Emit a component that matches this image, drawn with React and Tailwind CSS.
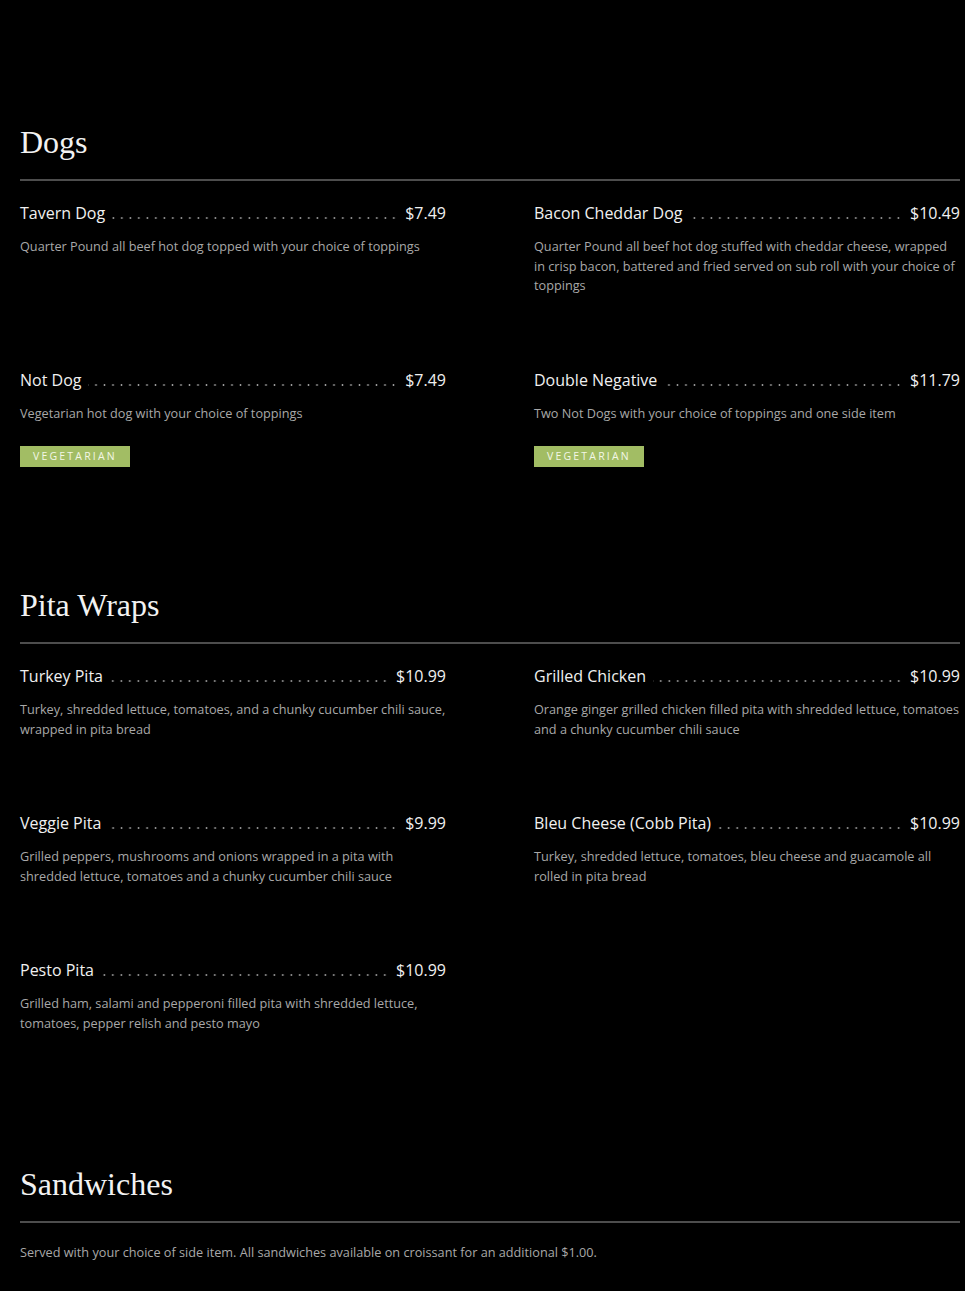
const sections = [
  {
    title: 'Dogs',
    gap: 'mb-[46px]',
    items: [
      { name: 'Tavern Dog', price: '$7.49', desc: 'Quarter Pound all beef hot dog topped with your choice of toppings' },
      { name: 'Bacon Cheddar Dog', price: '$10.49', desc: 'Quarter Pound all beef hot dog stuffed with cheddar cheese, wrapped in crisp bacon, battered and fried served on sub roll with your choice of toppings' },
      { name: 'Not Dog', price: '$7.49', desc: 'Vegetarian hot dog with your choice of toppings', tag: 'Vegetarian' },
      { name: 'Double Negative', price: '$11.79', desc: 'Two Not Dogs with your choice of toppings and one side item', tag: 'Vegetarian' },
    ],
  },
  {
    title: 'Pita Wraps',
    gap: 'mb-[59px]',
    items: [
      { name: 'Turkey Pita', price: '$10.99', desc: 'Turkey, shredded lettuce, tomatoes, and a chunky cucumber chili sauce, wrapped in pita bread' },
      { name: 'Grilled Chicken', price: '$10.99', desc: 'Orange ginger grilled chicken filled pita with shredded lettuce, tomatoes and a chunky cucumber chili sauce' },
      { name: 'Veggie Pita', price: '$9.99', desc: 'Grilled peppers, mushrooms and onions wrapped in a pita with shredded lettuce, tomatoes and a chunky cucumber chili sauce' },
      { name: 'Bleu Cheese (Cobb Pita)', price: '$10.99', desc: 'Turkey, shredded lettuce, tomatoes, bleu cheese and guacamole all rolled in pita bread' },
      { name: 'Pesto Pita', price: '$10.99', desc: 'Grilled ham, salami and pepperoni filled pita with shredded lettuce, tomatoes, pepper relish and pesto mayo' },
    ],
  },
];

function SectionHeader({ title }) {
  return (
    <div>
      <h2 className="font-['Liberation_Serif',serif] text-[32px] leading-[40px] font-normal text-[#f2f2f2]">{title}</h2>
      <div className="mt-[17px] h-[2px] bg-[#4d4d4d]" />
    </div>
  );
}

function MenuItem({ item }) {
  return (
    <div className="pb-[72px]">
      <div className="flex items-end text-[16px] leading-[24px] text-[#f0f0f0]">
        <span>{item.name}</span>
        <div className="flex-1 mx-[7px] mb-[5px] h-[4px] bg-[radial-gradient(circle,#9a9a9a_0.7px,transparent_1.2px)] bg-[length:8.5px_4px] bg-repeat-x bg-right" />
        <span>{item.price}</span>
      </div>
      <p className="mt-[12px] text-[12.7px] leading-[19.5px] text-[#a8a8a8]">{item.desc}</p>
      {item.tag && (
        <div className="mt-[23px] inline-block bg-[#a2bd64] px-[13px] h-[21px] leading-[21px] text-[10.5px] uppercase tracking-[2.2px] text-[#f3f7e6]">
          {item.tag}
        </div>
      )}
    </div>
  );
}

export default function App() {
  return (
    <div className="min-h-screen bg-black pl-5 pr-[5px] pt-[122px] pb-[30px] font-['Open_Sans',sans-serif]">
      {sections.map((section) => (
        <section key={section.title} className={section.gap}>
          <SectionHeader title={section.title} />
          <div className="mt-[20px] grid grid-cols-2 gap-x-[88px]">
            {section.items.map((item) => (
              <MenuItem key={item.name} item={item} />
            ))}
          </div>
        </section>
      ))}
      <section>
        <SectionHeader title="Sandwiches" />
        <p className="mt-[20px] text-[12.7px] leading-[19.5px] text-[#a8a8a8]">
          Served with your choice of side item. All sandwiches available on croissant for an additional $1.00.
        </p>
      </section>
    </div>
  );
}
